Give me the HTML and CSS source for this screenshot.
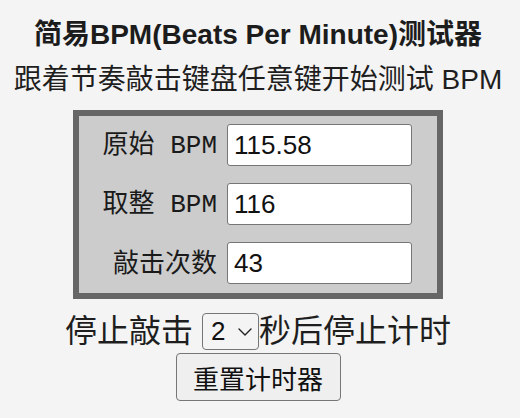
FILE: index.html
```html
<!DOCTYPE html>
<html lang="zh-CN">
<head>
<meta charset="utf-8">
<title>简易BPM测试器</title>
<link rel="stylesheet" href="styles.css">
</head>
<body>
<main class="page">
  <h1 class="title">简易BPM(Beats Per Minute)测试器</h1>
  <p class="subtitle">跟着节奏敲击键盘任意键开始测试 BPM</p>
  <section class="panel">
    <label class="label" for="raw">原始<span class="mono"> BPM</span></label>
    <input class="field" id="raw" type="text" value="115.58">
    <label class="label" for="round">取整<span class="mono"> BPM</span></label>
    <input class="field" id="round" type="text" value="116">
    <label class="label" for="hits">敲击次数</label>
    <input class="field" id="hits" type="text" value="43">
  </section>
  <div class="stop-row">
    <span class="stop-text">停止敲击&nbsp;</span>
    <span class="select-wrap">
      <select class="secs">
        <option>1</option>
        <option selected>2</option>
        <option>3</option>
        <option>4</option>
        <option>5</option>
      </select>
      <svg class="chev" width="14" height="8" viewBox="0 0 14 8" aria-hidden="true">
        <path d="M1 1 L7 7 L13 1" fill="none" stroke="#222" stroke-width="1.4" stroke-linecap="round" stroke-linejoin="round"/>
      </svg>
    </span>
    <span class="stop-text">秒后停止计时</span>
  </div>
  <div class="reset-row">
    <button class="reset" type="button">重置计时器</button>
  </div>
</main>
</body>
</html>
```

FILE: styles.css
```css
html, body {
  margin: 0;
  padding: 0;
  background: #f4f4f4;
}

body {
  font-family: "Liberation Sans", "Noto Sans CJK SC", sans-serif;
  color: #1e1e1e;
}

.page {
  width: 516px;
  padding-top: 18px;
  display: flex;
  flex-direction: column;
  align-items: center;
}

.title {
  margin: 0;
  font-size: 28px;
  font-weight: bold;
  line-height: 34px;
  color: #1c1c1c;
}

.subtitle {
  margin: 11px 0 0;
  font-size: 28px;
  line-height: 34px;
}

.panel {
  margin-top: 13px;
  width: 370px;
  box-sizing: border-box;
  border: 6px solid #666;
  background: #cccccc;
  padding: 8px 25px 9px 0;
  display: grid;
  grid-template-columns: 1fr 185px;
  column-gap: 10px;
  row-gap: 17px;
  align-items: center;
}

.label {
  text-align: right;
  font-size: 26px;
  line-height: 30px;
  color: #1a1a1a;
}

.mono {
  font-family: "Liberation Mono", monospace;
  font-size: 26px;
}

.field {
  box-sizing: border-box;
  width: 185px;
  height: 42px;
  margin: 0;
  padding: 1px 6px;
  border: 1px solid #767676;
  border-radius: 3px;
  background: #fff;
  font-family: "Liberation Sans", sans-serif;
  font-size: 26px;
  color: #111;
}

.stop-row {
  margin-top: 12px;
  display: flex;
  align-items: center;
  font-size: 32px;
  line-height: 40px;
}

.select-wrap {
  position: relative;
  display: flex;
}

.secs {
  -webkit-appearance: none;
  appearance: none;
  box-sizing: border-box;
  width: 57px;
  height: 37px;
  margin: 0;
  padding: 0 0 0 8px;
  font-family: "Liberation Sans", sans-serif;
  font-size: 26px;
  border: 1px solid #767676;
  border-radius: 4px;
  background-color: #f4f4f4;
  color: #111;
}

.chev {
  position: absolute;
  left: 36px;
  top: 15px;
  pointer-events: none;
}

.reset-row {
  margin-top: 2px;
  display: flex;
  justify-content: center;
}

.reset {
  box-sizing: border-box;
  width: 165px;
  height: 48px;
  margin: 0;
  padding: 0;
  font-family: "Liberation Sans", "Noto Sans CJK SC", sans-serif;
  font-size: 26px;
  border: 1px solid #767676;
  border-radius: 4px;
  background: #efefef;
  color: #111;
}
```
